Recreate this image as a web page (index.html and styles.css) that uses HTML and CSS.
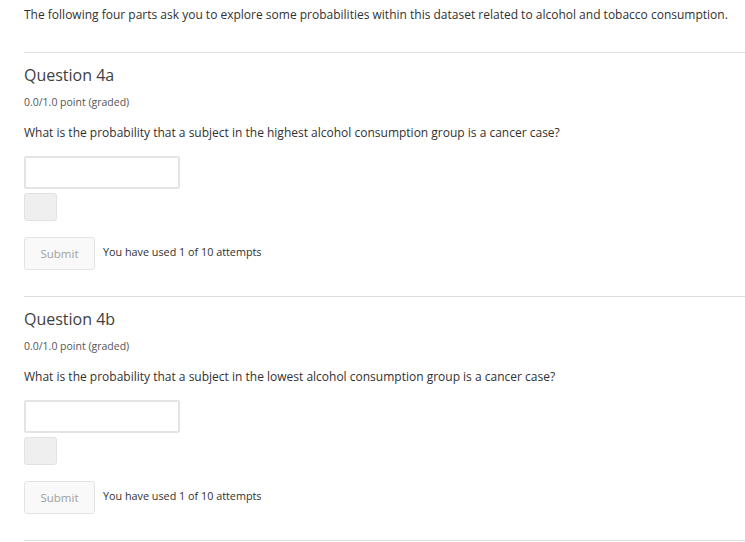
FILE: index.html
```html
<!DOCTYPE html>
<html lang="en">
<head>
<meta charset="utf-8">
<title>Questions</title>
<link rel="stylesheet" href="styles.css">
</head>
<body>
<div class="page">
  <p class="intro">The following four parts ask you to explore some probabilities within this dataset related to alcohol and tobacco consumption.</p>

  <section class="problem">
    <h3 class="problem-title">Question 4a</h3>
    <div class="problem-progress">0.0/1.0 point (graded)</div>
    <p class="problem-text">What is the probability that a subject in the highest alcohol consumption group is a cancer case?</p>
    <input class="answer-input" type="text" aria-label="Answer">
    <div class="status-box"></div>
    <div class="action-row">
      <button class="submit-btn" type="button">Submit</button>
      <span class="attempts">You have used 1 of 10 attempts</span>
    </div>
  </section>

  <section class="problem">
    <h3 class="problem-title">Question 4b</h3>
    <div class="problem-progress">0.0/1.0 point (graded)</div>
    <p class="problem-text">What is the probability that a subject in the lowest alcohol consumption group is a cancer case?</p>
    <input class="answer-input" type="text" aria-label="Answer">
    <div class="status-box"></div>
    <div class="action-row">
      <button class="submit-btn" type="button">Submit</button>
      <span class="attempts">You have used 1 of 10 attempts</span>
    </div>
  </section>
  <div class="end-rule"></div>
</div>
</body>
</html>
```

FILE: styles.css
```css
html, body {
  margin: 0;
  padding: 0;
  background: #ffffff;
}

body {
  font-family: "Open Sans", "Noto Sans", "Liberation Sans", sans-serif;
  color: #313131;
  width: 745px;
  height: 542px;
  overflow: hidden;
}

.page {
  padding-left: 24px;
}

.intro {
  margin: 0;
  padding-top: 7px;
  padding-bottom: 29px;
  font-size: 12px;
  line-height: 16px;
  color: #313131;
}

.problem {
  border-top: 1px solid #dddddd;
  padding-top: 12px;
  padding-bottom: 26px;
}

.problem-title {
  margin: 0;
  font-size: 16px;
  line-height: 20px;
  font-weight: 400;
  color: #414141;
}

.problem-progress {
  margin-top: 11px;
  font-size: 10.5px;
  line-height: 12px;
  color: #555555;
}

.problem-text {
  margin: 17px 0 0 0;
  font-size: 12px;
  line-height: 16px;
  color: #313131;
}

.answer-input {
  display: block;
  box-sizing: border-box;
  margin-top: 15px;
  width: 156px;
  height: 33px;
  border: 2px solid #e4e4e4;
  border-radius: 2px;
  background: #ffffff;
  padding: 0 6px;
  outline: none;
}

.status-box {
  box-sizing: border-box;
  margin-top: 4px;
  width: 33px;
  height: 28px;
  background: #efefef;
  border: 1px solid #e2e2e2;
  border-radius: 3px;
}

.action-row {
  display: flex;
  align-items: center;
  gap: 8px;
  margin-top: 16px;
}

.submit-btn {
  box-sizing: border-box;
  width: 71px;
  height: 33px;
  padding: 0;
  font-family: inherit;
  font-size: 11.5px;
  color: #a0a0a0;
  background: #f9f9f9;
  border: 1px solid #e4e4e4;
  border-radius: 3px;
}

.attempts {
  font-size: 10.8px;
  line-height: 15px;
  color: #313131;
  padding-bottom: 4px;
}

.end-rule {
  border-top: 1px solid #dddddd;
}
```
